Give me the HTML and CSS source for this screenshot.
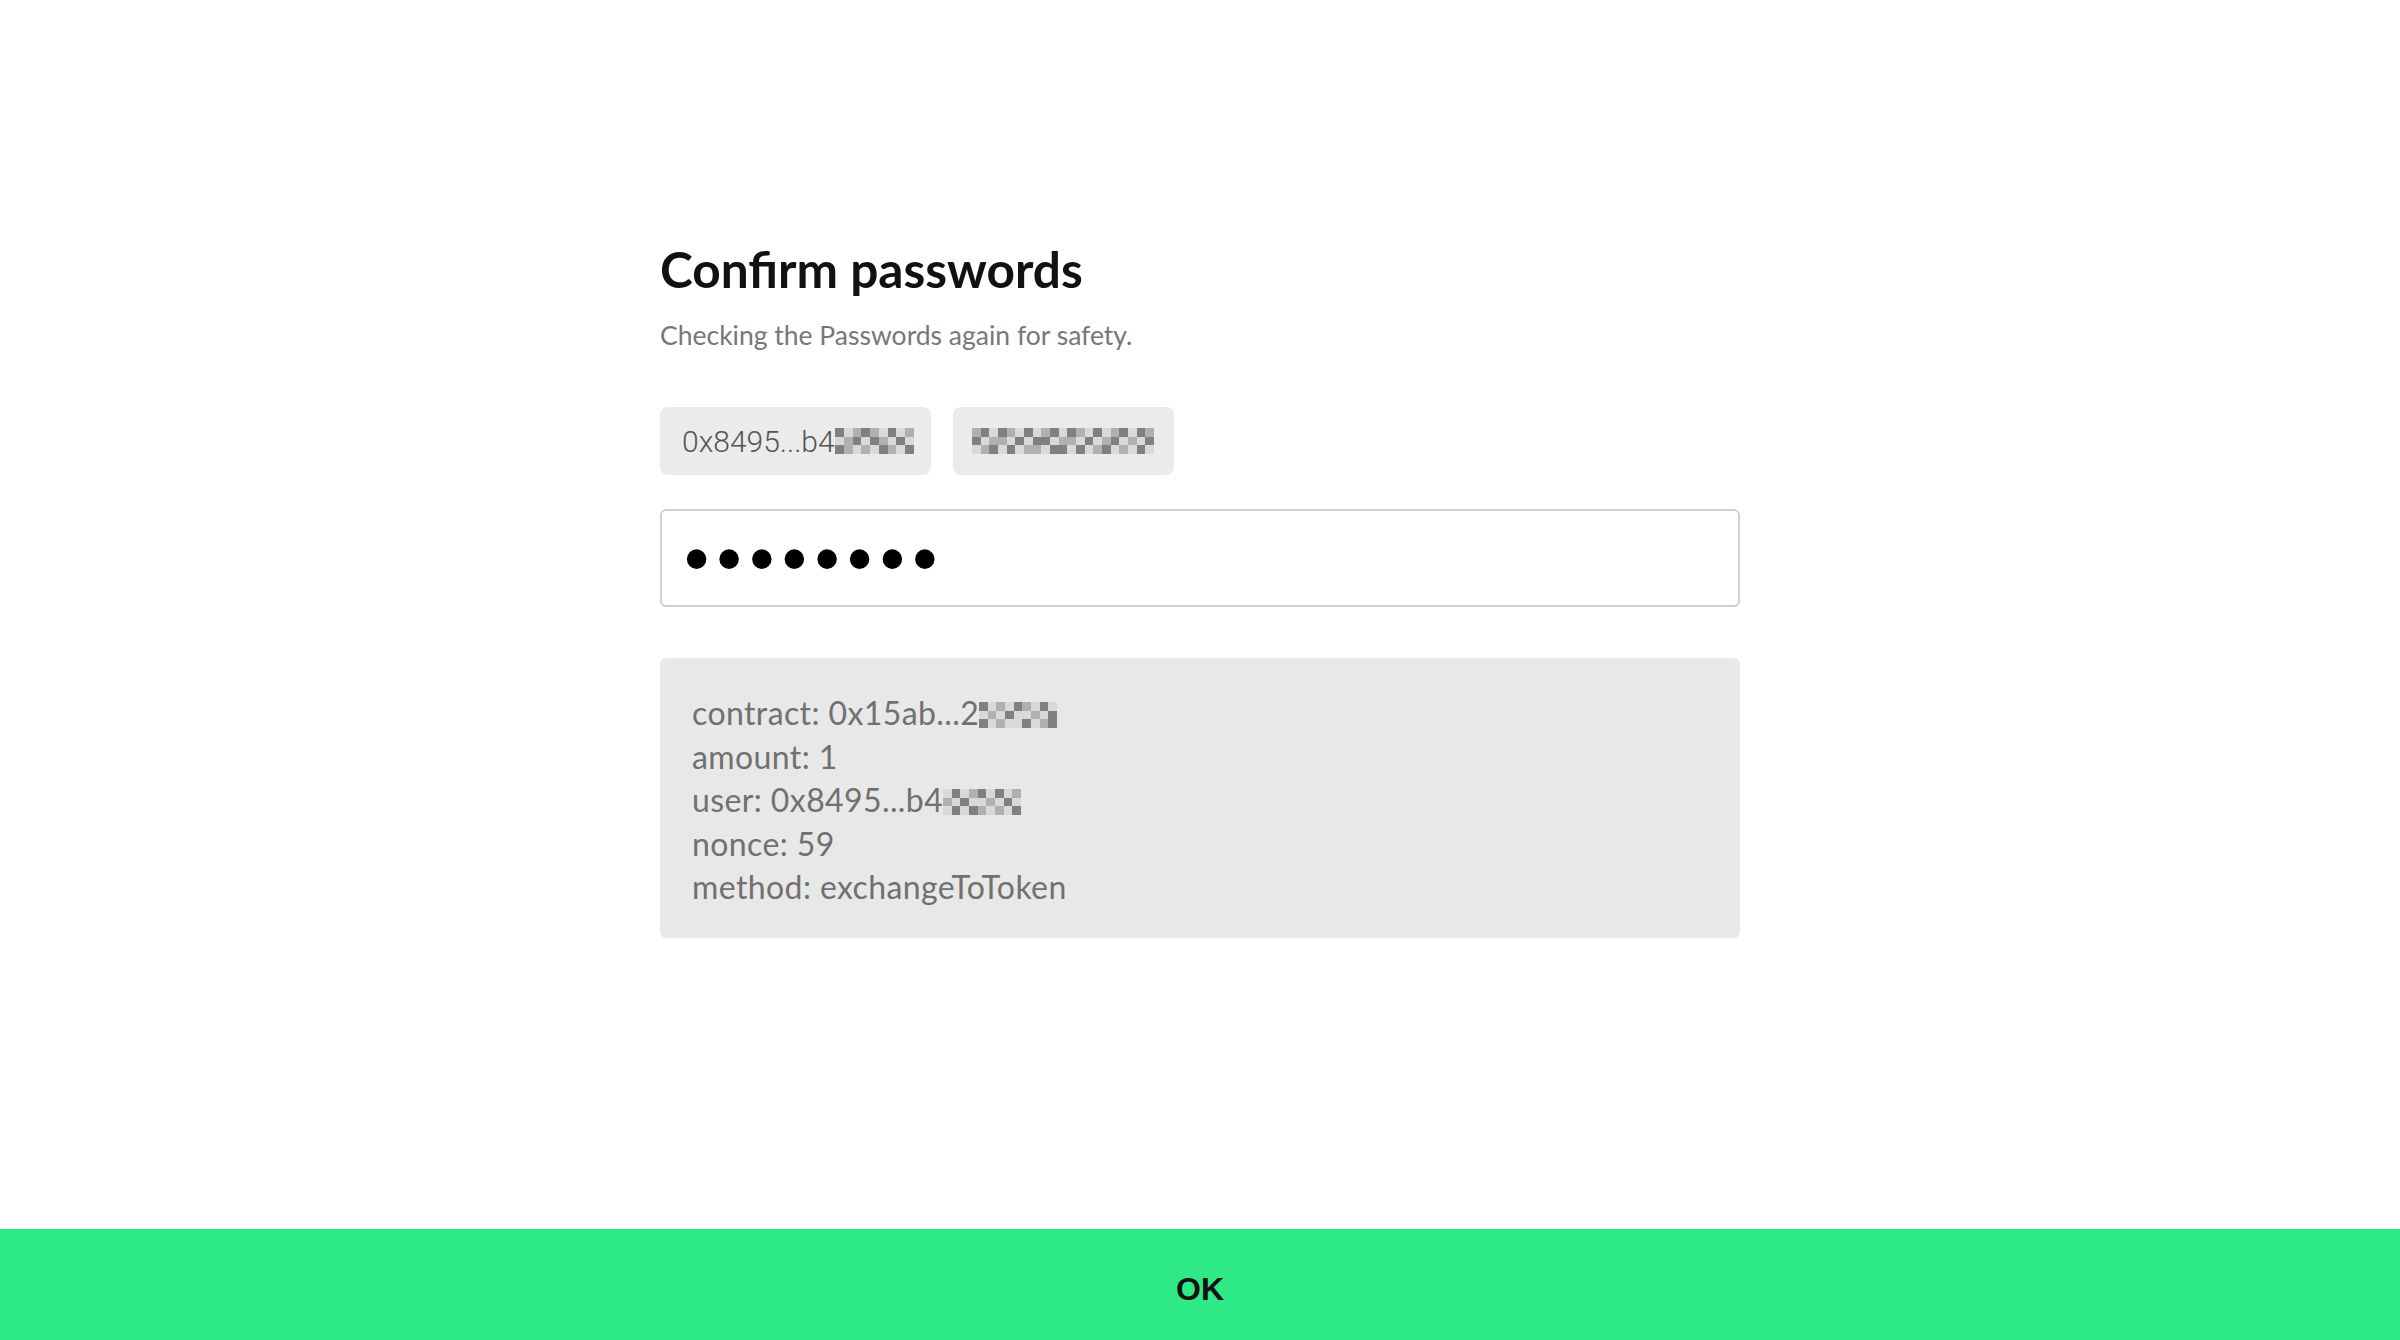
FILE: index.html
```html
<!DOCTYPE html>
<html lang="en">
<head>
<meta charset="utf-8">
<title>Confirm passwords</title>
<link rel="stylesheet" href="styles.css">
</head>
<body>
<div class="page">
  <main class="content">
    <h1 class="title">Confirm passwords</h1>
    <p class="subtitle">Checking the Passwords again for safety.</p>

    <div class="chips">
      <div class="chip">
        <span>0x8495...b4</span>
        <svg class="mosaic" width="79" height="28" viewBox="0 0 9 3" shape-rendering="crispEdges">
          <rect width="9" height="3" class="l"/>
          <rect x="0" y="0" width="1" height="1" class="d"/><rect x="2" y="0" width="1" height="1" class="m"/><rect x="3" y="0" width="1" height="1" class="d"/><rect x="4" y="0" width="1" height="1" class="m"/><rect x="6" y="0" width="1" height="1" class="d"/><rect x="8" y="0" width="1" height="1" class="m"/>
          <rect x="1" y="1" width="1" height="1" class="m"/><rect x="2" y="1" width="1" height="1" class="d"/><rect x="4" y="1" width="1" height="1" class="d"/><rect x="5" y="1" width="1" height="1" class="m"/><rect x="7" y="1" width="1" height="1" class="d"/>
          <rect x="0" y="2" width="1" height="1" class="d"/><rect x="1" y="2" width="1" height="1" class="m"/><rect x="3" y="2" width="1" height="1" class="m"/><rect x="5" y="2" width="1" height="1" class="d"/><rect x="6" y="2" width="1" height="1" class="m"/><rect x="8" y="2" width="1" height="1" class="d"/>
        </svg>
      </div>
      <div class="chip chip-masked">
        <svg class="mosaic" width="182" height="28" viewBox="0 0 21 3" shape-rendering="crispEdges">
          <rect width="21" height="3" class="l"/>
          <rect x="0" y="0" width="1" height="1" class="m"/><rect x="1" y="0" width="1" height="1" class="d"/><rect x="3" y="0" width="1" height="1" class="d"/><rect x="4" y="0" width="1" height="1" class="m"/><rect x="6" y="0" width="1" height="1" class="d"/><rect x="8" y="0" width="1" height="1" class="m"/><rect x="9" y="0" width="1" height="1" class="d"/><rect x="11" y="0" width="1" height="1" class="d"/><rect x="12" y="0" width="1" height="1" class="m"/><rect x="14" y="0" width="1" height="1" class="d"/><rect x="16" y="0" width="1" height="1" class="m"/><rect x="17" y="0" width="1" height="1" class="d"/><rect x="19" y="0" width="1" height="1" class="d"/><rect x="20" y="0" width="1" height="1" class="m"/>
          <rect x="0" y="1" width="1" height="1" class="d"/><rect x="2" y="1" width="1" height="1" class="m"/><rect x="3" y="1" width="1" height="1" class="m"/><rect x="5" y="1" width="1" height="1" class="d"/><rect x="7" y="1" width="1" height="1" class="d"/><rect x="8" y="1" width="1" height="1" class="d"/><rect x="10" y="1" width="1" height="1" class="m"/><rect x="11" y="1" width="1" height="1" class="m"/><rect x="13" y="1" width="1" height="1" class="d"/><rect x="15" y="1" width="1" height="1" class="m"/><rect x="16" y="1" width="1" height="1" class="d"/><rect x="18" y="1" width="1" height="1" class="m"/><rect x="20" y="1" width="1" height="1" class="d"/>
          <rect x="1" y="2" width="1" height="1" class="m"/><rect x="2" y="2" width="1" height="1" class="d"/><rect x="4" y="2" width="1" height="1" class="d"/><rect x="6" y="2" width="1" height="1" class="m"/><rect x="7" y="2" width="1" height="1" class="m"/><rect x="9" y="2" width="1" height="1" class="d"/><rect x="10" y="2" width="1" height="1" class="d"/><rect x="12" y="2" width="1" height="1" class="d"/><rect x="14" y="2" width="1" height="1" class="m"/><rect x="15" y="2" width="1" height="1" class="d"/><rect x="17" y="2" width="1" height="1" class="m"/><rect x="19" y="2" width="1" height="1" class="d"/>
        </svg>
      </div>
    </div>

    <input class="password" type="password" value="12345678" aria-label="Password">

    <div class="details">
      <div class="line">contract: 0x15ab...2<svg class="mosaic line-mosaic" width="78" height="26" viewBox="0 0 9 3" shape-rendering="crispEdges">
          <rect width="9" height="3" class="l"/>
          <rect x="0" y="0" width="1" height="1" class="d"/><rect x="2" y="0" width="1" height="1" class="m"/><rect x="4" y="0" width="1" height="1" class="d"/><rect x="5" y="0" width="1" height="1" class="m"/><rect x="7" y="0" width="1" height="1" class="d"/>
          <rect x="1" y="1" width="1" height="1" class="m"/><rect x="3" y="1" width="1" height="1" class="d"/><rect x="6" y="1" width="1" height="1" class="m"/><rect x="8" y="1" width="1" height="1" class="d"/>
          <rect x="0" y="2" width="1" height="1" class="d"/><rect x="2" y="2" width="1" height="1" class="m"/><rect x="5" y="2" width="1" height="1" class="d"/><rect x="7" y="2" width="1" height="1" class="m"/><rect x="8" y="2" width="1" height="1" class="d"/>
        </svg></div>
      <div class="line">amount: 1</div>
      <div class="line">user: 0x8495...b4<svg class="mosaic line-mosaic" width="78" height="26" viewBox="0 0 9 3" shape-rendering="crispEdges">
          <rect width="9" height="3" class="l"/>
          <rect x="1" y="0" width="1" height="1" class="d"/><rect x="3" y="0" width="1" height="1" class="m"/><rect x="4" y="0" width="1" height="1" class="d"/><rect x="6" y="0" width="1" height="1" class="d"/><rect x="8" y="0" width="1" height="1" class="m"/>
          <rect x="0" y="1" width="1" height="1" class="m"/><rect x="2" y="1" width="1" height="1" class="d"/><rect x="5" y="1" width="1" height="1" class="m"/><rect x="7" y="1" width="1" height="1" class="d"/>
          <rect x="1" y="2" width="1" height="1" class="d"/><rect x="3" y="2" width="1" height="1" class="d"/><rect x="4" y="2" width="1" height="1" class="m"/><rect x="6" y="2" width="1" height="1" class="m"/><rect x="8" y="2" width="1" height="1" class="d"/>
        </svg></div>
      <div class="line">nonce: 59</div>
      <div class="line">method: exchangeToToken</div>
    </div>
  </main>

  <button class="ok-bar" type="button">OK</button>
</div>
</body>
</html>
```

FILE: styles.css
```css
* {
  box-sizing: border-box;
}

html,
body {
  margin: 0;
  padding: 0;
  background: #ffffff;
}

.page {
  height: 1340px;
  display: flex;
  flex-direction: column;
}

.content {
  flex: 1;
  width: 1080px;
  margin: 0 auto;
  padding-top: 239px;
  display: flex;
  flex-direction: column;
  font-family: Lato, "Noto Sans", sans-serif;
}

.title {
  margin: 0;
  font-size: 49.6px;
  line-height: 60px;
  font-weight: 700;
  color: #111111;
}

.subtitle {
  margin: 20px 0 0;
  font-size: 26.5px;
  line-height: 32px;
  color: #777777;
}

.chips {
  margin-top: 56px;
  display: flex;
  gap: 22px;
}

.chip {
  height: 68px;
  padding: 0 17px 0 22px;
  display: flex;
  align-items: center;
  background: #ebebeb;
  border-radius: 8px;
  font-family: Roboto, "Noto Sans", sans-serif;
  font-weight: 300;
  font-size: 30px;
  color: #555555;
}

.chip-masked {
  padding: 0 20px 0 19px;
}

.mosaic .l { fill: #d9d9d9; }
.mosaic .m { fill: #b0b0b0; }
.mosaic .d { fill: #808080; }

.line-mosaic {
  vertical-align: -3px;
}

.password {
  margin-top: 34px;
  height: 98px;
  width: 100%;
  padding: 0 22px;
  border: 2px solid #d0d0d0;
  border-radius: 6px;
  background: #ffffff;
  font-family: "Liberation Sans", Arial, sans-serif;
  font-size: 72px;
  letter-spacing: 7.4px;
  color: #000000;
  outline: none;
}

.details {
  margin-top: 51px;
  height: 280px;
  padding: 33px 32px 0;
  background: #e8e8e8;
  border-radius: 6px;
  font-size: 32px;
  letter-spacing: 0.4px;
  line-height: 43.5px;
  color: #707070;
}

.line {
  white-space: nowrap;
}

.ok-bar {
  height: 111px;
  width: 100%;
  border: 0;
  margin: 0;
  padding: 9px 0 0;
  background: #2de986;
  font-family: "Liberation Sans", Arial, sans-serif;
  font-size: 32px;
  font-weight: 700;
  color: #111111;
  cursor: pointer;
}
```
